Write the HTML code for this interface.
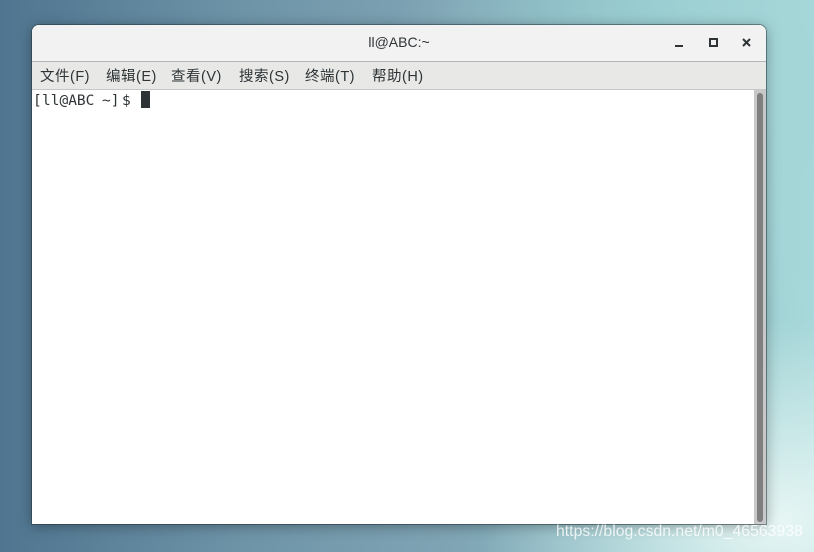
<!DOCTYPE html>
<html><head><meta charset="utf-8"><style>
body{margin:0;width:814px;height:552px;overflow:hidden;position:relative;
background:
radial-gradient(ellipse 300px 200px at 780px 520px,#e6f6f4 0%,rgba(200,235,235,0) 100%),
radial-gradient(ellipse 400px 300px at 780px 100px,#a4d6d8 0%,rgba(150,210,215,0) 100%),
linear-gradient(90deg,#4f7590 0%,#6e94a8 30%,#7fa4b4 55%,#8cc2c8 80%,#a8d8da 100%);
font-family:"Liberation Sans","Noto Sans CJK SC",sans-serif;}
.win{position:absolute;left:32px;top:25px;width:734px;height:499px;background:#fff;border-radius:7px 7px 0 0;box-shadow:0 2px 14px rgba(0,0,0,.35),0 0 0 1px rgba(40,60,70,.5);overflow:hidden}
.title{height:36px;background:#f2f2f2;border-bottom:1px solid #b5b5b5;position:relative}
.title .t{position:absolute;left:0;right:0;top:9px;text-align:center;font-size:14px;color:#2e3436}
.menu{height:27px;background:#e8e8e7;border-bottom:1px solid #c6c6c6;font-size:14.5px;color:#2e3436;line-height:27px;position:relative}
.menu span{position:absolute;top:2px;letter-spacing:.5px}
.m{position:absolute;font-family:"DejaVu Sans Mono","Liberation Mono",monospace;font-size:14.5px;color:#2e3436;top:68px;white-space:pre}
.cur{position:absolute;left:109px;top:66px;width:9px;height:17px;background:#2e3436}
.sb{position:absolute;right:0;top:65px;width:12px;bottom:0;background:#c8c8c8}
.sb div{position:absolute;left:3px;width:6px;top:3px;bottom:2px;background:#7f7f7f;border-radius:3px}
.wm{position:absolute;left:556px;top:523px;font-size:15.8px;color:rgba(255,255,255,.8)}
</style></head><body>
<div class="win">
<div class="title"><div class="t">ll@ABC:~</div>
<svg style="position:absolute;left:640px;top:12px" width="90" height="14">
<rect x="3" y="8" width="8" height="2" fill="#2e3436"/>
<rect x="38" y="2" width="7" height="7" fill="none" stroke="#2e3436" stroke-width="2"/>
<path d="M71 2L78 9M78 2L71 9" stroke="#2e3436" stroke-width="2"/>
</svg></div>
<div class="menu"><span style="left:8px">文件(F)</span><span style="left:74px">编辑(E)</span><span style="left:139px">查看(V)</span><span style="left:207px">搜索(S)</span><span style="left:273px">终端(T)</span><span style="left:340px">帮助(H)</span></div>
<div class="m" style="left:1px">[</div>
<div class="m" style="left:10px">ll@ABC</div>
<div class="m" style="left:70px">~]</div>
<div class="m" style="left:90px">$</div>
<div class="cur"></div>
<div class="sb"><div></div></div>
</div>
<div class="wm">https://blog.csdn.net/m0_46563938</div>
</body></html>
